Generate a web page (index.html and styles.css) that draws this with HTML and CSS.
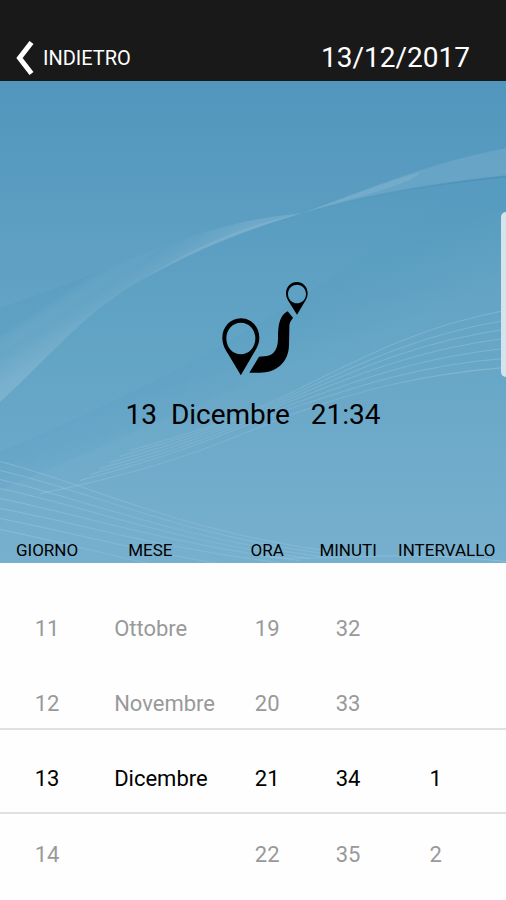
FILE: index.html
```html
<!DOCTYPE html>
<html lang="it">
<head>
<meta charset="utf-8">
<meta name="viewport" content="width=device-width, initial-scale=1">
<title>Percorso</title>
<link rel="stylesheet" href="styles.css">
</head>
<body>
<header class="topbar">
  <button class="back" type="button">
    <svg class="back-icon" viewBox="0 0 18 34" aria-hidden="true"><path d="M15.500 1.500 3.500 17 15.500 32.500"/></svg>
    <span>INDIETRO</span>
  </button>
  <time class="date" datetime="2017-12-13">13/12/2017</time>
</header>
<main class="screen">
  <svg class="backdrop" viewBox="0 81 506 819" preserveAspectRatio="xMidYMin slice" aria-hidden="true">
    <defs>
      <linearGradient id="sky" gradientUnits="userSpaceOnUse" x1="0" y1="81" x2="0" y2="563">
        <stop offset="0" stop-color="#5296bd"/>
        <stop offset=".5" stop-color="#64a4c5"/>
        <stop offset="1" stop-color="#78b0cf"/>
      </linearGradient>
      <linearGradient id="ribbon" gradientUnits="userSpaceOnUse" x1="110" y1="262" x2="135" y2="300">
        <stop offset="0" stop-color="#2f86b4" stop-opacity=".1"/>
        <stop offset=".4" stop-color="#fff" stop-opacity=".01"/>
        <stop offset="1" stop-color="#fff" stop-opacity=".11"/>
      </linearGradient>
      <linearGradient id="fold" gradientUnits="userSpaceOnUse" x1="180" y1="364" x2="210" y2="424">
        <stop offset="0" stop-color="#2f86b4" stop-opacity=".13"/>
        <stop offset="1" stop-color="#2f86b4" stop-opacity="0"/>
      </linearGradient>
      <linearGradient id="fade" gradientUnits="userSpaceOnUse" x1="0" y1="0" x2="506" y2="0">
        <stop offset="0" stop-color="#c5e2ee" stop-opacity=".26"/>
        <stop offset=".35" stop-color="#c5e2ee" stop-opacity=".14"/>
        <stop offset="1" stop-color="#c5e2ee" stop-opacity=".26"/>
      </linearGradient>
      <linearGradient id="edge" gradientUnits="userSpaceOnUse" x1="302" y1="0" x2="506" y2="0">
        <stop offset="0" stop-color="#2f7fa8" stop-opacity="0"/>
        <stop offset="1" stop-color="#2f7fa8" stop-opacity=".35"/>
      </linearGradient>
    </defs>
    <rect y="81" width="506" height="819" fill="url(#sky)"/>
    <path fill="#3f9bc3" fill-opacity=".08" d="M0 402C25 380 50 352 80 325C130 278 210 240 302 213C375 192 440 181 506 176V563H0Z"/>
    <path fill="url(#ribbon)" d="M0 308C50 290 90 275 133 258C190 236 230 220 302 213C210 240 130 278 80 325C50 352 25 380 0 402Z"/>
    <path fill="#fff" fill-opacity=".09" d="M302 213C370 188 430 162 506 148V176C430 184 370 194 302 213Z"/>
    <path fill="#fff" fill-opacity=".08" d="M302 213C350 196 380 184 420 172C415 181 385 190 302 213Z"/>
    <path fill="#fff" fill-opacity=".08" d="M302 213C250 223 195 245 140 281C195 251 240 231 302 213Z"/>
    <path fill="none" stroke="url(#edge)" stroke-width="2" d="M302 213C370 194 430 184 506 176"/>
    <path fill="#fff" fill-opacity=".03" d="M0 452C80 418 150 384 220 346C300 302 380 242 440 205L506 180V563H0Z"/>
    <path fill="url(#fold)" d="M0 452C80 418 150 384 220 346C300 302 380 242 440 205L506 180V360H300L0 490Z"/>
    <g class="wave-lines">
      <path d="M506 310C420 326 360 358 300 388S200 430 130 450"/>
      <path d="M506 320C420 334 360 363 300 391S200 433 120 456"/>
      <path d="M506 329C420 341 360 368 300 394S200 437 110 462"/>
      <path d="M506 338C420 349 360 373 300 397S200 441 100 468"/>
      <path d="M506 348C420 357 360 379 300 401S200 445 90 474"/>
      <path d="M506 358C420 365 360 385 300 405S200 448 80 480"/>
      <path d="M506 367C420 374 360 390 300 411S190 463 40 493"/>
      <path d="M0 461C100 487 170 528 330 551"/>
      <path d="M0 470C100 493 170 532 330 554"/>
      <path d="M0 479C90 500 170 536 320 556"/>
      <path d="M0 488C90 507 170 540 310 558"/>
      <path d="M0 498C90 516 170 544 300 560"/>
      <path d="M0 508C90 525 160 548 280 562"/>
      <path d="M0 518C80 534 150 553 220 563"/>
      <path d="M0 529C60 541 110 555 150 563"/>
      <path d="M270 557C340 560 410 549 506 561"/>
    </g>
  </svg>
  <section class="hero">
    <svg class="route" viewBox="-7 36 333 282" role="img" aria-label="Percorso">
      <path fill-rule="evenodd" d="M121.500 145C152 145 177 170 177 203C177 222 169 235 160 250L121.500 316L82 250C73 235 66 222 66 203C66 170 91 145 121.500 145ZM121.500 158C97 158 78 178 78 205C78 233 97 253 121.500 253S165 233 165 205C165 178 146 158 121.500 158Z"/>
      <path fill-rule="evenodd" d="M289.500 36C307 36 322 50 322 70C322 83 316 91 311 99L290 134L268 99C262 90 257 83 257 70C257 50 272 36 289.500 36ZM290 44C275 44 263 56 263 72S275 100 290 100S317 88 317 72S305 44 290 44Z"/>
      <path d="M262 124 278 143 272 152C267 158 267 166 267 178L266 225C265 280 225 308 179 308L147 308 176 260 200 258C222 255 233 236 233 205C233 165 238 135 262 124Z"/>
    </svg>
    <p class="chosen">13  Dicembre   21:34</p>
  </section>
  <div class="edge-handle"></div>
  <table class="picker">
    <colgroup><col class="c-day"><col class="c-month"><col class="c-time"><col class="c-time"><col class="c-step"></colgroup>
    <thead>
      <tr><th scope="col">GIORNO</th><th scope="col" class="month">MESE</th><th scope="col">ORA</th><th scope="col">MINUTI</th><th scope="col">INTERVALLO</th></tr>
    </thead>
    <tbody>
      <tr class="first"><td>11</td><td class="month">Ottobre</td><td>19</td><td>32</td><td class="step"></td></tr>
      <tr class="before"><td>12</td><td class="month">Novembre</td><td>20</td><td>33</td><td class="step"></td></tr>
      <tr class="selected"><td>13</td><td class="month">Dicembre</td><td>21</td><td>34</td><td class="step">1</td></tr>
      <tr class="after"><td>14</td><td class="month"></td><td>22</td><td>35</td><td class="step">2</td></tr>
    </tbody>
  </table>
</main>
</body>
</html>
```
FILE: styles.css
```css
* {
  box-sizing: border-box;
}

body {
  margin: 0;
  background: #fefefe;
  color: #000;
  font-family: Roboto, "Liberation Sans", sans-serif;
}

.topbar {
  display: flex;
  align-items: center;
  justify-content: space-between;
  padding: 38px 36px 3px 16px;
  background: #191919;
  color: #fff;
}

.back {
  display: flex;
  align-items: center;
  gap: 9px;
  padding: 0;
  border: 0;
  background: none;
  color: inherit;
  font: inherit;
  font-size: 20px;
  line-height: 40px;
}

.back-icon {
  width: 18px;
  height: 34px;
  fill: none;
  stroke: #fff;
  stroke-width: 5;
}

.date {
  font-size: 28px;
  line-height: 40px;
}

.screen {
  position: relative;
  overflow: hidden;
}

.backdrop {
  position: absolute;
  inset: 0;
  width: 100%;
  height: 100%;
}

.wave-lines {
  fill: none;
  stroke: url(#fade);
}

.hero {
  position: relative;
  display: flex;
  flex-direction: column;
  align-items: center;
  gap: 23px;
  padding: 201px 16px 107px;
}

.route {
  width: 111px;
  height: 94px;
}

.chosen {
  margin: 0;
  font-size: 28px;
  line-height: 32px;
  white-space: pre;
}

.edge-handle {
  position: absolute;
  top: 131px;
  right: 0;
  width: 5px;
  height: 165px;
  border-radius: 5px 0 0 5px;
  background: #d3e4ec;
}

.picker {
  position: relative;
  width: 100%;
  table-layout: fixed;
  border-spacing: 0;
  text-align: center;
  white-space: nowrap;
}

.c-day {
  width: 19%;
}

.c-month {
  width: 26%;
}

.c-time {
  width: 16%;
}

.c-step {
  width: 23%;
}

.picker th {
  padding: 0 2px 1px 0;
  font-size: 17px;
  font-weight: 400;
  line-height: 24px;
}

.picker th.month {
  padding-left: 32px;
  text-align: left;
}

.picker tbody {
  background: #fefefe;
  color: #999;
}

.picker td {
  padding: 0 2px 0 0;
  font-size: 22px;
  line-height: 26px;
}

.picker td.month {
  padding-left: 18px;
  text-align: left;
}

.picker td.step {
  padding-right: 24px;
}

.picker .first td {
  padding-top: 53px;
  padding-bottom: 24px;
}

.picker .before td {
  padding-top: 25px;
  padding-bottom: 11px;
}

.picker .selected td {
  padding-top: 36px;
  padding-bottom: 20px;
  border: solid #e0e0e0;
  border-width: 2px 0;
  color: #000;
}

.picker .after td {
  padding-top: 28px;
  padding-bottom: 33px;
}
```
